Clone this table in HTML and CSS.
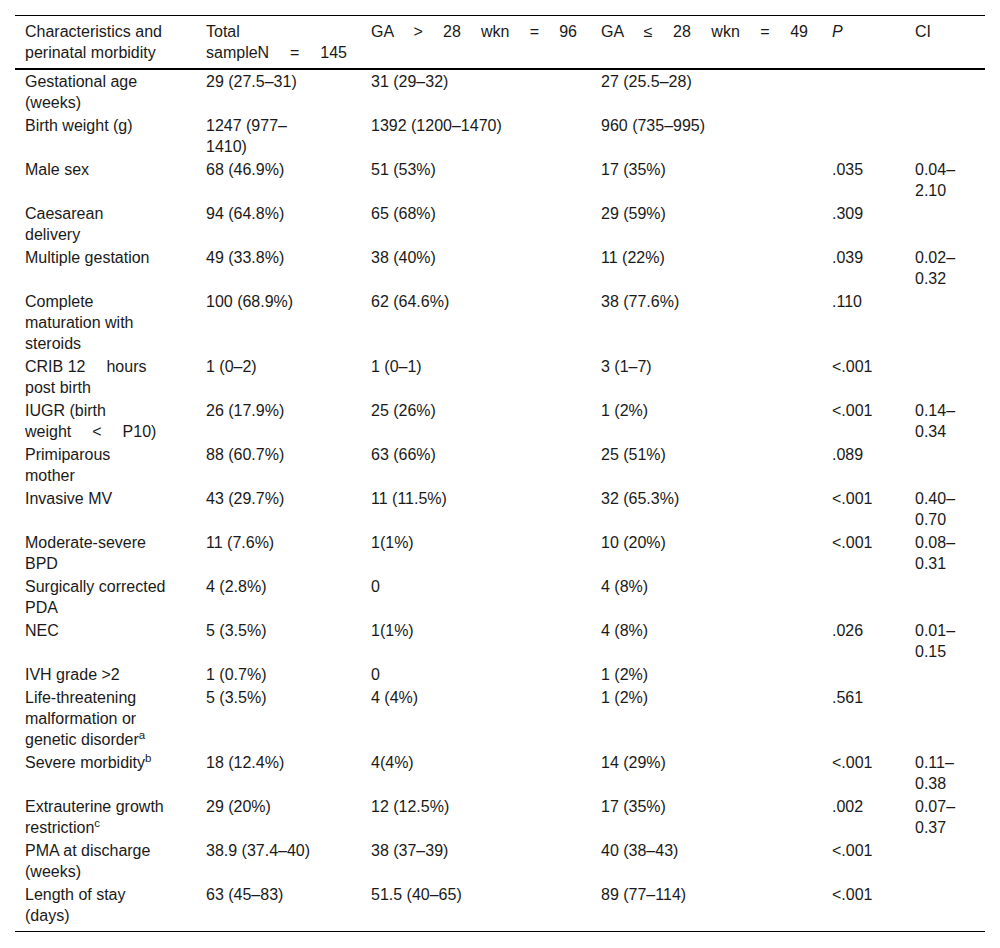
FILE: index.html
```html
<!DOCTYPE html>
<html>
<head>
<meta charset="utf-8">
<link rel="stylesheet" href="styles.css">
</head>
<body>
<table class="data">
  <colgroup>
    <col class="c1"><col class="c2"><col class="c3"><col class="c4"><col class="c5"><col class="c6">
  </colgroup>
  <thead>
    <tr>
      <th>Characteristics and<br>perinatal morbidity</th>
      <th class="just">Total<br>sampleN = 145</th>
      <th class="just">GA &gt; 28 wkn = 96</th>
      <th class="just">GA ≤ 28 wkn = 49</th>
      <th><i>P</i></th>
      <th>CI</th>
    </tr>
  </thead>
  <tbody>
    <tr><td>Gestational age<br>(weeks)</td><td>29 (27.5–31)</td><td>31 (29–32)</td><td>27 (25.5–28)</td><td></td><td></td></tr>
    <tr><td>Birth weight (g)</td><td>1247 (977–<br>1410)</td><td>1392 (1200–1470)</td><td>960 (735–995)</td><td></td><td></td></tr>
    <tr><td>Male sex</td><td>68 (46.9%)</td><td>51 (53%)</td><td>17 (35%)</td><td>.035</td><td>0.04–<br>2.10</td></tr>
    <tr><td>Caesarean<br>delivery</td><td>94 (64.8%)</td><td>65 (68%)</td><td>29 (59%)</td><td>.309</td><td></td></tr>
    <tr><td>Multiple gestation</td><td>49 (33.8%)</td><td>38 (40%)</td><td>11 (22%)</td><td>.039</td><td>0.02–<br>0.32</td></tr>
    <tr><td>Complete<br>maturation with<br>steroids</td><td>100 (68.9%)</td><td>62 (64.6%)</td><td>38 (77.6%)</td><td>.110</td><td></td></tr>
    <tr><td>CRIB 12<span class="sp"></span>hours<br>post birth</td><td>1 (0–2)</td><td>1 (0–1)</td><td>3 (1–7)</td><td>&lt;.001</td><td></td></tr>
    <tr><td>IUGR (birth<br>weight<span class="sp"></span>&lt;<span class="sp"></span>P10)</td><td>26 (17.9%)</td><td>25 (26%)</td><td>1 (2%)</td><td>&lt;.001</td><td>0.14–<br>0.34</td></tr>
    <tr><td>Primiparous<br>mother</td><td>88 (60.7%)</td><td>63 (66%)</td><td>25 (51%)</td><td>.089</td><td></td></tr>
    <tr><td>Invasive MV</td><td>43 (29.7%)</td><td>11 (11.5%)</td><td>32 (65.3%)</td><td>&lt;.001</td><td>0.40–<br>0.70</td></tr>
    <tr><td>Moderate-severe<br>BPD</td><td>11 (7.6%)</td><td>1(1%)</td><td>10 (20%)</td><td>&lt;.001</td><td>0.08–<br>0.31</td></tr>
    <tr><td>Surgically corrected<br>PDA</td><td>4 (2.8%)</td><td>0</td><td>4 (8%)</td><td></td><td></td></tr>
    <tr><td>NEC</td><td>5 (3.5%)</td><td>1(1%)</td><td>4 (8%)</td><td>.026</td><td>0.01–<br>0.15</td></tr>
    <tr><td>IVH grade &gt;2</td><td>1 (0.7%)</td><td>0</td><td>1 (2%)</td><td></td><td></td></tr>
    <tr><td>Life-threatening<br>malformation or<br>genetic disorder<sup>a</sup></td><td>5 (3.5%)</td><td>4 (4%)</td><td>1 (2%)</td><td>.561</td><td></td></tr>
    <tr><td>Severe morbidity<sup>b</sup></td><td>18 (12.4%)</td><td>4(4%)</td><td>14 (29%)</td><td>&lt;.001</td><td>0.11–<br>0.38</td></tr>
    <tr><td>Extrauterine growth<br>restriction<sup>c</sup></td><td>29 (20%)</td><td>12 (12.5%)</td><td>17 (35%)</td><td>.002</td><td>0.07–<br>0.37</td></tr>
    <tr><td>PMA at discharge<br>(weeks)</td><td>38.9 (37.4–40)</td><td>38 (37–39)</td><td>40 (38–43)</td><td>&lt;.001</td><td></td></tr>
    <tr class="last"><td>Length of stay<br>(days)</td><td>63 (45–83)</td><td>51.5 (40–65)</td><td>89 (77–114)</td><td>&lt;.001</td><td></td></tr>
  </tbody>
</table>
</body>
</html>
```
FILE: styles.css
```css
html, body {
  margin: 0;
  padding: 0;
  background: #fff;
}
body {
  padding: 15px 15px 0 15px;
  font-family: "Liberation Sans", Arial, sans-serif;
  font-size: 16px;
  line-height: 21px;
  color: #1a1a1a;
}
.data {
  width: 970px;
  border-collapse: collapse;
  table-layout: fixed;
}
.c1 { width: 181px; }
.c2 { width: 165px; }
.c3 { width: 230px; }
.c4 { width: 231px; }
.c5 { width: 83px; }
.c6 { width: 80px; }
.data thead tr {
  border-top: 1px solid #000;
  border-bottom: 2px solid #000;
}
.data th {
  font-weight: normal;
  text-align: left;
  vertical-align: top;
  padding: 5px 10px 5px 10px;
}
.data th.just {
  text-align: justify;
  text-align-last: justify;
  padding-right: 14px;
}
.data td {
  vertical-align: top;
  padding: 1px 10px;
}
.data tbody tr.last {
  border-bottom: 1px solid #000;
}
.data tbody tr.last td {
  padding-bottom: 5px;
}
.sp {
  display: inline-block;
  width: 21px;
}
sup {
  font-size: 11.5px;
  line-height: 0;
  vertical-align: 6px;
}
```
